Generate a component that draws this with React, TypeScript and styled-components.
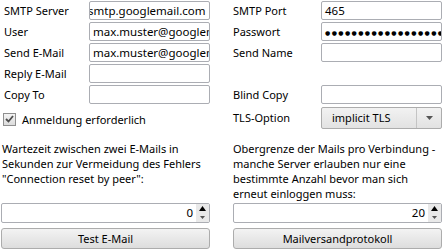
import React from 'react'
import styled, { createGlobalStyle } from 'styled-components'

const GlobalStyle = createGlobalStyle`
  body {
    margin: 0;
    background: #ffffff;
    font-family: "Noto Sans", "Open Sans", sans-serif;
    font-size: 11px;
    color: #000000;
  }
`

const Page = styled.div`
  width: 443px;
  height: 252px;
  overflow: hidden;
  display: flex;
  flex-direction: column;
`

const TopSection = styled.div`
  display: flex;
  gap: 23px;
  padding-left: 4px;
`

const Panel = styled.div<{ $labelWidth: number }>`
  display: grid;
  grid-template-columns: ${(p) => p.$labelWidth}px 121px;
  grid-template-rows: repeat(5, 21px) 25px;
  align-items: center;
`

const Label = styled.span`
  white-space: nowrap;
  line-height: 15px;
`

const Field = styled.div<{ $shift?: number }>`
  box-sizing: border-box;
  height: 19px;
  border: 1px solid #abadb3;
  border-radius: 2px;
  background: #ffffff;
  padding: 0 3px;
  overflow: hidden;
  white-space: nowrap;
  line-height: 17px;
  font-size: 11.5px;
  text-indent: ${(p) => p.$shift ?? 0}px;
`

const Dots = styled.span`
  font-family: "DejaVu Sans", sans-serif;
  font-size: 6px;
  letter-spacing: 1.4px;
  vertical-align: 1px;
`

const Spacer = styled.div``

const CheckRow = styled.label`
  grid-column: 1 / span 2;
  display: flex;
  align-items: center;
  gap: 6px;
  margin-left: -1px;
  padding-top: 3px;
`

const CheckBox = styled.span`
  box-sizing: border-box;
  width: 13px;
  height: 13px;
  border: 1px solid #8f8f8f;
  background: linear-gradient(#f4f4f4, #dcdcdc);
  display: flex;
  align-items: center;
  justify-content: center;
`

const Select = styled.div`
  box-sizing: border-box;
  height: 22px;
  border: 1px solid #acacac;
  border-radius: 2px;
  background: linear-gradient(#f2f2f2, #e2e2e2);
  display: flex;
  align-items: stretch;
`

const SelectValue = styled.span`
  flex: 1;
  padding-left: 10px;
  line-height: 20px;
  border-right: 1px solid #c4c4c4;
`

const SelectArrow = styled.span`
  width: 24px;
  display: flex;
  align-items: center;
  justify-content: center;
`

const BottomSection = styled.div`
  margin-top: 11px;
  padding-left: 1px;
  display: grid;
  grid-template-columns: 209px 209px;
  grid-template-rows: 60px 20px 21px;
  column-gap: 23px;
`

const Description = styled.p<{ $indent?: number }>`
  margin: 0;
  padding-left: ${(p) => p.$indent ?? 0}px;
  line-height: 15px;
  white-space: nowrap;
`

const SpinBox = styled.div`
  box-sizing: border-box;
  height: 20px;
  margin-top: 2px;
  border: 1px solid #abadb3;
  border-radius: 2px;
  background: #ffffff;
  display: flex;
  align-items: stretch;
`

const SpinValue = styled.span`
  flex: 1;
  text-align: right;
  padding-right: 3px;
  line-height: 18px;
  font-size: 11.5px;
`

const SpinButtons = styled.span`
  width: 13px;
  display: flex;
  flex-direction: column;
  background: #e9e9e9;
`

const SpinStep = styled.span`
  flex: 1;
  display: flex;
  align-items: center;
  justify-content: center;
`

const Button = styled.button`
  box-sizing: border-box;
  height: 21px;
  margin-top: 7px;
  border: 1px solid #acacac;
  border-radius: 3px;
  background: linear-gradient(#f3f3f3, #dddddd);
  font-family: inherit;
  font-size: 11px;
  color: #000000;
  padding: 0;
`

function Spinner({ value }: { value: string }) {
  return (
    <SpinBox>
      <SpinValue>{value}</SpinValue>
      <SpinButtons>
        <SpinStep>
          <svg width="7" height="5" viewBox="0 0 7 5">
            <path d="M0 5 L3.5 0 L7 5 Z" fill="#000" />
          </svg>
        </SpinStep>
        <SpinStep>
          <svg width="5" height="3" viewBox="0 0 5 3">
            <path d="M0 0 L5 0 L2.5 3 Z" fill="#555" />
          </svg>
        </SpinStep>
      </SpinButtons>
    </SpinBox>
  )
}

export default function App() {
  return (
    <Page>
      <GlobalStyle />
      <TopSection>
        <Panel $labelWidth={85}>
          <Label>SMTP Server</Label>
          <Field $shift={-5}>smtp.googlemail.com</Field>
          <Label>User</Label>
          <Field>max.muster@googlemail.com</Field>
          <Label>Send E-Mail</Label>
          <Field>max.muster@googlemail.com</Field>
          <Label>Reply E-Mail</Label>
          <Field />
          <Label>Copy To</Label>
          <Field />
          <CheckRow>
            <CheckBox>
              <svg width="9" height="8" viewBox="0 0 9 8">
                <path d="M1 4 L3.5 6.5 L8 1" stroke="#4d4d4d" strokeWidth="1.8" fill="none" />
              </svg>
            </CheckBox>
            Anmeldung erforderlich
          </CheckRow>
        </Panel>
        <Panel $labelWidth={88}>
          <Label>SMTP Port</Label>
          <Field>465</Field>
          <Label>Passwort</Label>
          <Field>
            <Dots>●●●●●●●●●●●●●●●●●●●●</Dots>
          </Field>
          <Label>Send Name</Label>
          <Field />
          <Spacer />
          <Spacer />
          <Label>Blind Copy</Label>
          <Field />
          <Label>TLS-Option</Label>
          <Select>
            <SelectValue>implicit TLS</SelectValue>
            <SelectArrow>
              <svg width="7" height="4" viewBox="0 0 7 4">
                <path d="M0 0 L7 0 L3.5 4 Z" fill="#555" />
              </svg>
            </SelectArrow>
          </Select>
        </Panel>
      </TopSection>
      <BottomSection>
        <Description $indent={1}>
          Wartezeit zwischen zwei E-Mails in
          <br />
          Sekunden zur Vermeidung des Fehlers
          <br />
          "Connection reset by peer":
        </Description>
        <Description>
          Obergrenze der Mails pro Verbindung -
          <br />
          manche Server erlauben nur eine
          <br />
          bestimmte Anzahl bevor man sich
          <br />
          erneut einloggen muss:
        </Description>
        <Spinner value="0" />
        <Spinner value="20" />
        <Button>Test E-Mail</Button>
        <Button>Mailversandprotokoll</Button>
      </BottomSection>
    </Page>
  )
}
